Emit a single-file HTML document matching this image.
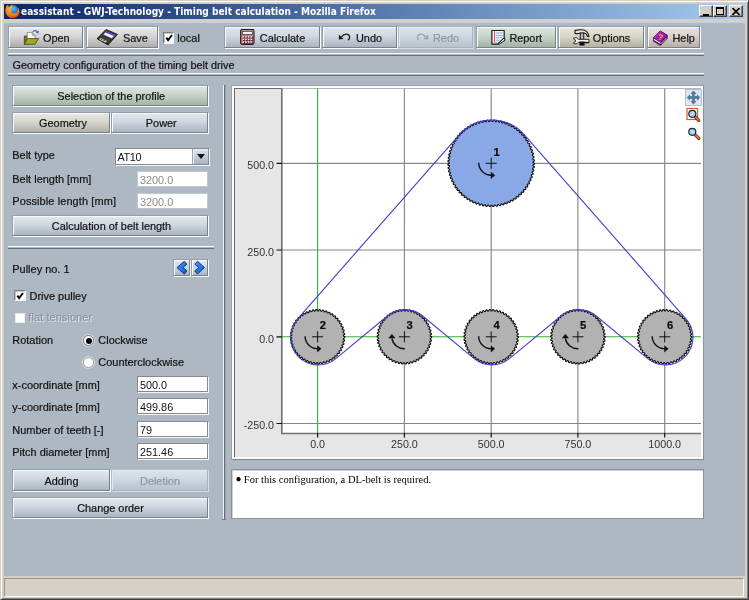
<!DOCTYPE html>
<html><head><meta charset="utf-8"><title>eassistant - GWJ-Technology - Timing belt calculation</title>
<style>
html,body{margin:0;padding:0;}
html{background:#d4d0c8;}
#all{left:0;top:0;width:749px;height:600px;filter:blur(0.4px);}
body{width:749px;height:600px;overflow:hidden;position:relative;background:#d4d0c8;font-family:"Liberation Sans",sans-serif;font-size:10.85px;color:#111;}
.abs,.abs *{position:absolute;}
div{position:absolute;box-sizing:border-box;}
#main{left:4px;top:22px;width:741px;height:554.4px;background:#aeb8c3;}
#title{left:4px;top:3.6px;width:741px;height:15.8px;background:linear-gradient(90deg,#0a246a 0%,#a6caf0 100%);}
#title span{position:absolute;left:17px;top:0.8px;line-height:15px;color:#fff;font-family:"DejaVu Sans Condensed","DejaVu Sans","Liberation Sans",sans-serif;font-weight:bold;font-size:10.07px;white-space:nowrap;}
.wb{background:#d4d0c8;border:1px solid;border-color:#fff #404040 #404040 #fff;box-shadow:inset -1px -1px 0 #808080;}
.btn{border:0;}
.btn i{position:absolute;left:0;top:0;right:1px;bottom:1px;border:1px solid;border-color:#959da6 #7a8087 #7a8087 #959da6;box-shadow:inset 1px 1px 0 #fafbfc,1px 1px 0 #f8fafb;background:linear-gradient(#e2e8ee 0%,#cfd7e0 45%,#aab5c1 100%);}
.btn span{position:absolute;white-space:nowrap;line-height:14px;font-size:10.9px;-webkit-text-stroke:0.2px #111;transform:translate(1px,1px);}
.btn.c span{left:0;right:0;text-align:center;transform:translate(0,1px);}
.btn>svg{transform:translate(1px,1px);}
.tb>svg{transform:translate(1px,1.8px);}
.gray i{background:linear-gradient(#ebebeb 0%,#d6d6d6 45%,#adadad 100%);}
.green i{background:linear-gradient(#dfe7df 0%,#c8d4ca 45%,#a3b3a7 100%);}
.beige i{background:linear-gradient(#eae8de 0%,#d9d6c9 45%,#b5b2a1 100%);}
.pink i{background:linear-gradient(#eae5e2 0%,#d9d1cd 45%,#b9ada9 100%);}
.geo i{background:linear-gradient(#e8e8e2 0%,#d7d7cf 45%,#b0b0a8 100%);}
.dis i{border-color:#b4bdc7 #a8b1bb #a8b1bb #b4bdc7;box-shadow:inset 1px 1px 0 #e2e8ee,1px 1px 0 #d6dde4;background:linear-gradient(#dde4eb 0%,#cfd8e1 45%,#b7c2cd 100%);}
.dis span{color:#8e969e;-webkit-text-stroke:0.2px #8e969e;}
.sep{height:3px;border-top:1px solid #f6f8fa;border-bottom:2px solid #6c7074;border-bottom-width:1.5px;}
.lbl{white-space:nowrap;line-height:14px;font-size:10.95px;-webkit-text-stroke:0.2px #111;margin-left:-0.7px;}
.inp{background:#fff;border:1px solid #858a90;box-shadow:1px 1px 0 #f4f6f8;}
.inp span{position:absolute;left:2px;top:1px;line-height:14px;font-size:10.85px;}
.inp.d{border-color:#c0c8d0;box-shadow:none;}
.inp.d span{color:#8c8c8c;}
.cb{width:11.5px;height:11.3px;background:#fff;border:1px solid;border-color:#7c8086 #f6f8fa #f6f8fa #7c8086;box-shadow:inset 1px 1px 0 #c4c8cc;}
text{font-family:"Liberation Sans",sans-serif;}
.ax{font-size:10.7px;fill:#333;}
.pn{font-size:11.2px;font-weight:bold;fill:#0a0a0a;stroke:#0a0a0a;stroke-width:.2px;}
</style></head><body><div id="all">
<!-- window frame -->
<div style="left:0;top:0;width:749px;height:600px;border:1px solid;border-color:#d4d0c8 #404040 #404040 #d4d0c8;box-shadow:inset 1px 1px 0 #fff,inset -1px -1px 0 #808080;"></div>
<div id="title"><span>eassistant - GWJ-Technology - Timing belt calculation - Mozilla Firefox</span>
<svg style="position:absolute;left:0;top:0" width="18" height="16" viewBox="0 0 18 16"><defs><radialGradient id="fg" cx=".45" cy=".3" r=".8"><stop offset="0" stop-color="#fcc028"/><stop offset=".6" stop-color="#f07c18"/><stop offset="1" stop-color="#c8400c"/></radialGradient><radialGradient id="gg" cx=".5" cy=".35" r=".7"><stop offset="0" stop-color="#58c0f0"/><stop offset="1" stop-color="#1c48b0"/></radialGradient></defs><circle cx="9.300" cy="6.300" r="5" fill="url(#gg)"/><path d="M1.600 4.200C2 2.600 3 1.400 4.200.8 4 1.800 4.300 2.600 5 3 6 1.600 7.500 1 9 1 7.800 1.800 7.600 3 8.200 3.800 7 4.200 6.800 5.600 7.600 6.400 6.600 7 6.800 8.600 8.200 9.200 10.200 10 12.600 9 13.600 7.200 14.200 6 14.200 4.600 13.800 3.600 15.400 5 16 7.600 15.200 9.800 14.200 12.600 11.400 14.200 8.400 14 4.600 13.800 1.600 10.800 1.400 7.400 1.300 6.200 1.300 5.200 1.600 4.200z" fill="url(#fg)"/></svg>
<div class="wb" style="left:695px;top:1px;width:14px;height:12.3px;"><div style="left:3px;top:8px;width:6px;height:2px;background:#000"></div></div>
<div class="wb" style="left:709px;top:1px;width:14px;height:12.3px;"><div style="left:2px;top:1px;width:8px;height:8px;border:1px solid #000;border-top-width:2px"></div></div>
<div class="wb" style="left:725px;top:1px;width:14px;height:12.3px;"><svg style="position:absolute;left:2px;top:2px" width="8" height="7"><path d="M0.5 0L7.500 7M7.500 0L0.500 7" stroke="#000" stroke-width="1.600"/></svg></div>
</div>
<div id="main">
<!-- toolbar -->
<div class="btn tb gray" style="left:4px;top:4px;width:76px;height:23px;"><i></i><span style="left:34px;top:3.7px;">Open</span>
<svg style="position:absolute;left:14px;top:1px" width="18" height="18" viewBox="0 0 18 18"><path d="M1.300 7.200h3.200v8.300H1.300z" fill="#6c7014" stroke="#3c4008" stroke-width=".7"/><path d="M4.200 3.600h5l2.800 2.800v5H4.200z" fill="#fafaf6" stroke="#707070" stroke-width=".7"/><path d="M9.200 3.600v2.800H12" fill="#d8d8d0" stroke="#707070" stroke-width=".6"/><path d="M1.300 15.500L4.600 9.800h11l-3.400 5.700z" fill="#a2a62e" stroke="#484c0a" stroke-width=".8" stroke-linejoin="round"/><path d="M9.800 2.900c1.600-1.500 3.800-1.300 4.800.4" fill="none" stroke="#3a64e0" stroke-width="1.200"/><path d="M15.700 1.600l-.2 3.300-2.700-1.300z" fill="#3a64e0"/></svg></div>
<div class="btn tb gray" style="left:82px;top:4px;width:73px;height:23px;"><i></i><span style="left:36px;top:3.7px;">Save</span>
<svg style="position:absolute;left:10px;top:1px" width="23" height="18" viewBox="0 0 23 18"><path d="M.4 9.500L9 .7l11.400 4.900-8.900 10z" fill="#3c3c3c" stroke="#141414" stroke-width=".9" stroke-linejoin="round"/><path d="M.4 9.500l11.100 6.100v1.100L.4 10.600z" fill="#0c0c0c"/><path d="M9.400 2.700l8.400 3.400-3 3.300-8.400-3.600z" fill="#f4f4f8"/><path d="M9.400 2.700l8.400 3.400-.9 1-8.400-3.500z" fill="#3434f0"/><path d="M3.600 9.300l6.400 3-1.500 1.700-6.400-3.100z" fill="#c4c4c4"/><path d="M5.300 10.100l-1.500 1.600M7.600 11.200l-1.500 1.700" stroke="#222" stroke-width=".9"/></svg></div>
<div class="cb" style="left:158.7px;top:10.3px;"><svg style="position:absolute;left:1px;top:1px" width="8" height="8" viewBox="0 0 8 8"><path d="M1.300 3.600L3.100 6.100 7 1" fill="none" stroke="#000" stroke-width="1.900"/></svg></div>
<div class="lbl" style="left:174px;top:9px;">local</div>
<div class="btn tb c" style="left:220px;top:4px;width:97px;height:23px;"><i></i><span style="top:3.7px;padding-left:20px;">Calculate</span>
<svg style="position:absolute;left:14.800px;top:1px" width="15" height="17" viewBox="0 0 15 17"><defs><linearGradient id="kg" x1="0" y1="0" x2="0" y2="1"><stop offset="0" stop-color="#a49494"/><stop offset=".45" stop-color="#bc7880"/><stop offset="1" stop-color="#cc6878"/></linearGradient></defs><rect x=".6" y=".6" width="13.400" height="15" rx="1.600" fill="url(#kg)" stroke="#2c2020" stroke-width="1.100"/><rect x="2.400" y="2.600" width="9.800" height="3" fill="#fafafa" stroke="#4a3a3a" stroke-width=".7"/><rect x="3.1" y="7.9" width="1.700" height="1.700" fill="#1a1010"/><rect x="2.6" y="7.4" width="1.500" height="1.400" fill="#fbf4f4"/><rect x="5.8" y="7.9" width="1.700" height="1.700" fill="#1a1010"/><rect x="5.3" y="7.4" width="1.500" height="1.400" fill="#fbf4f4"/><rect x="8.5" y="7.9" width="1.700" height="1.700" fill="#1a1010"/><rect x="8.0" y="7.4" width="1.500" height="1.400" fill="#fbf4f4"/><rect x="11.2" y="7.9" width="1.700" height="1.700" fill="#1a1010"/><rect x="10.7" y="7.4" width="1.500" height="1.400" fill="#fbf4f4"/><rect x="3.1" y="10.5" width="1.700" height="1.700" fill="#1a1010"/><rect x="2.6" y="10.0" width="1.500" height="1.400" fill="#fbf4f4"/><rect x="5.8" y="10.5" width="1.700" height="1.700" fill="#1a1010"/><rect x="5.3" y="10.0" width="1.500" height="1.400" fill="#fbf4f4"/><rect x="8.5" y="10.5" width="1.700" height="1.700" fill="#1a1010"/><rect x="8.0" y="10.0" width="1.500" height="1.400" fill="#fbf4f4"/><rect x="11.2" y="10.5" width="1.700" height="1.700" fill="#1a1010"/><rect x="10.7" y="10.0" width="1.500" height="1.400" fill="#fbf4f4"/><rect x="3.1" y="13.1" width="1.700" height="1.700" fill="#1a1010"/><rect x="2.6" y="12.6" width="1.500" height="1.400" fill="#fbf4f4"/><rect x="5.8" y="13.1" width="1.700" height="1.700" fill="#1a1010"/><rect x="5.3" y="12.6" width="1.500" height="1.400" fill="#fbf4f4"/><rect x="8.5" y="13.1" width="1.700" height="1.700" fill="#1a1010"/><rect x="8.0" y="12.6" width="1.500" height="1.400" fill="#fbf4f4"/><rect x="11.2" y="13.1" width="1.700" height="1.700" fill="#1a1010"/><rect x="10.7" y="12.6" width="1.500" height="1.400" fill="#fbf4f4"/></svg></div>
<div class="btn tb c" style="left:318px;top:4px;width:76px;height:23px;"><i></i><span style="top:3.7px;padding-left:18px;">Undo</span>
<svg style="position:absolute;left:15px;top:4px" width="13" height="10" viewBox="0 0 13 10"><path d="M10 8.300C12.600 6.500 12.200 2.600 8.200 2.400 6.200 2.300 4.800 3.400 3.400 5.200" fill="none" stroke="#1c1c1c" stroke-width="1.300"/><path d="M.8 2.800v5l4.700-.5z" fill="#1c1c1c"/></svg></div>
<div class="btn tb c dis" style="left:394px;top:4px;width:76px;height:23px;"><i></i><span style="top:3.7px;padding-left:20px;">Redo</span>
<svg style="position:absolute;left:16.500px;top:4px" width="13" height="10" viewBox="0 0 13 10"><g transform="translate(13,0) scale(-1,1)"><path d="M10 8.300C12.600 6.500 12.200 2.600 8.200 2.400 6.200 2.300 4.800 3.400 3.400 5.200" fill="none" stroke="#9aa2aa" stroke-width="1.300"/><path d="M.8 2.800v5l4.700-.5z" fill="#9aa2aa"/></g></svg></div>
<div class="btn tb c green" style="left:472px;top:4px;width:81px;height:23px;"><i></i><span style="top:3.7px;padding-left:18.5px;">Report</span>
<svg style="position:absolute;left:14px;top:2px" width="16" height="16" viewBox="0 0 16 16"><path d="M.9.700h12.300v7.400L6.600 14.300H.9z" fill="#f2f6fc" stroke="#1c1c1c" stroke-width="1.200" stroke-linejoin="round"/><path d="M4.600 3.200h7.600M4.600 5.600h7.600M4.600 8h6.400M4.600 10.400h4M4.600 12.600h2" stroke="#84b0e4" stroke-width="1"/><path d="M3.500 1.300v12.500" stroke="#f05848" stroke-width="1"/><path d="M13.200 8.100l.8 2.400-6 3.900-1.400-.1z" fill="#eceef2" stroke="#1c1c1c" stroke-width="1" stroke-linejoin="round"/></svg></div>
<div class="btn tb c beige" style="left:554px;top:4px;width:87px;height:23px;"><i></i><span style="top:3.7px;padding-left:20px;">Options</span>
<svg style="position:absolute;left:13px;top:1px" width="18" height="18" viewBox="0 0 18 18"><path d="M3 1.600L8 1C12 .5 16 2.200 17 7.600L15.300 7.600C15 5.200 13.500 4.200 11.600 4.200L8.400 4.200C7 4.700 5 5 3 4.600z" fill="#e6e6e6" stroke="#1a1a1a" stroke-width="1.100" stroke-linejoin="round"/><rect x="8.200" y="4.300" width="3.600" height="7" fill="#6a6a6a" stroke="#1a1a1a" stroke-width=".9"/><path d="M10 4.800v6" stroke="#f4f4f4" stroke-width="1.100"/><path d="M1.200 9.600c1.800-1.300 4.300-.8 5.200.9H17v3H6.400c-.9 1.700-3.400 2.200-5.200.9l2.200-1.500v-1.800z" fill="#f2f2f2" stroke="#1a1a1a" stroke-width=".9" stroke-linejoin="round"/><rect x="7.400" y="12.800" width="5.200" height="4" fill="#141414"/><path d="M12 13.900h5.200" stroke="#141414" stroke-width="1.300"/></svg></div>
<div class="btn tb pink" style="left:643px;top:4px;width:54px;height:23px;"><i></i><span style="left:24.5px;top:3.7px;">Help</span>
<svg style="position:absolute;left:5px;top:2px" width="17" height="17" viewBox="0 0 17 17"><path d="M.3 8L7.300 1.200l7 4.300v3L7.400 15.700.3 11.200z" fill="#3c0a4c" stroke="#2a0636" stroke-width=".6" stroke-linejoin="round"/><path d="M.9 10.200l6.500 4 .1-1.700-6.600-3.800z" fill="#f6f2f8"/><path d="M7.900 14l6-6.300" stroke="#f0e8f4" stroke-width=".8"/><path d="M.3 8L7.300 1.200l7 4.300-6.900 7z" fill="#a41cb4" stroke="#5c0c6c" stroke-width=".6" stroke-linejoin="round"/><path d="M1.600 7.600L7.400 2" stroke="#d890e0" stroke-width=".7" stroke-dasharray=".8 .7"/><text x="5.200" y="10" style="font-size:8px;font-weight:bold;fill:#f8cc10" transform="rotate(14 7 7)">?</text></svg></div>
<div class="sep" style="left:4px;top:30.5px;width:696px;"></div>
<div class="lbl" style="left:9.3px;top:36px;font-size:10.85px;">Geometry configuration of the timing belt drive</div>
<div class="sep" style="left:4px;top:51px;width:696px;"></div>
<!-- left panel -->
<div class="btn c green" style="left:8px;top:63px;width:197px;height:22px;"><i></i><span style="top:3.2px;padding-left:1.5px;">Selection of the profile</span></div>
<div class="btn c geo" style="left:8px;top:90px;width:99px;height:22px;"><i></i><span style="top:3px;padding-left:3px;">Geometry</span></div>
<div class="btn c" style="left:107px;top:90px;width:98px;height:22px;"><i></i><span style="top:3px;padding-left:2.6px;">Power</span></div>
<div class="lbl" style="left:9px;top:126px;">Belt type</div>
<div class="inp" style="left:111px;top:126px;width:94px;height:17px;"><span style="left:1.4px;letter-spacing:-0.3px;">AT10</span>
<div style="right:0;top:0;width:16px;height:15px;border-left:1px solid #98a2ac;background:linear-gradient(#dde4eb,#a8b3bf);box-shadow:inset 1px 1px 0 #eef2f6;"><div style="left:3.5px;top:5px;width:0;height:0;border:4px solid transparent;border-top:5px solid #111;border-bottom:0;"></div></div></div>
<div class="lbl" style="left:9px;top:150px;">Belt length [mm]</div>
<div class="inp d" style="left:133px;top:149px;width:71px;height:16px;"><span>3200.0</span></div>
<div class="lbl" style="left:9px;top:172px;letter-spacing:0.11px;">Possible length [mm]</div>
<div class="inp d" style="left:133px;top:171px;width:71px;height:16px;"><span>3200.0</span></div>
<div class="btn c" style="left:8px;top:193px;width:197px;height:22px;"><i></i><span style="top:3px;padding-left:2px;">Calculation of belt length</span></div>
<div class="sep" style="left:4px;top:224px;width:206px;"></div>
<div class="lbl" style="left:9px;top:240px;">Pulley no. 1</div>
<div class="btn" style="left:169px;top:237px;width:18px;height:18px;"><i></i><svg style="position:absolute;left:0;top:0" width="17" height="17" viewBox="0 0 17 17"><defs><linearGradient id="cg" x1="0" y1="0" x2="1" y2="1"><stop offset="0" stop-color="#3c9cf8"/><stop offset="1" stop-color="#0c58cc"/></linearGradient></defs><path d="M3 7.600L10.300 1.300 13 4.200 9 7.600 13 11 10.300 14z" fill="url(#cg)" stroke="#0a2c84" stroke-width=".9" stroke-linejoin="round"/></svg></div>
<div class="btn" style="left:187px;top:237px;width:18px;height:18px;"><i></i><svg style="position:absolute;left:0;top:0" width="17" height="17" viewBox="0 0 17 17"><path d="M12.500 7.600L5.500 1.300 2.800 4.200 6.800 7.600 2.800 11 5.500 14z" fill="url(#cg)" stroke="#0a2c84" stroke-width=".9" stroke-linejoin="round"/></svg></div>
<div class="cb" style="left:10px;top:268px;"><svg style="position:absolute;left:1px;top:1px" width="8" height="8" viewBox="0 0 8 8"><path d="M1.300 3.600L3.100 6.100 7 1" fill="none" stroke="#000" stroke-width="1.900"/></svg></div>
<div class="lbl" style="left:26.2px;top:267px;">Drive pulley</div>
<div class="cb" style="left:11px;top:291px;width:10px;height:10px;border-color:#e8ecf0;box-shadow:none;"></div>
<div class="lbl" style="left:25px;top:288px;color:#88929c;-webkit-text-stroke:0.15px #88929c;text-shadow:1px 1px 0 #e4e9ee;letter-spacing:0.09px;">flat tensioner</div>
<div class="lbl" style="left:9px;top:311px;">Rotation</div>
<div style="left:79px;top:313px;width:11px;height:11px;border-radius:50%;background:#fff;border:1px solid #70767c;box-shadow:0 0 0 1px #d0d6dc;"><div style="left:1.5px;top:1.5px;width:6px;height:6px;border-radius:50%;background:#000;"></div></div>
<div class="lbl" style="left:95px;top:311px;">Clockwise</div>
<div style="left:79px;top:335px;width:11px;height:11px;border-radius:50%;background:#fff;border:1px solid #9aa0a6;box-shadow:0 0 0 1px #d0d6dc;"></div>
<div class="lbl" style="left:95px;top:333px;">Counterclockwise</div>
<div class="lbl" style="left:9px;top:356px;">x-coordinate [mm]</div>
<div class="inp" style="left:133px;top:354px;width:71px;height:16px;"><span>500.0</span></div>
<div class="lbl" style="left:9px;top:378px;">y-coordinate [mm]</div>
<div class="inp" style="left:133px;top:376px;width:71px;height:16px;"><span>499.86</span></div>
<div class="lbl" style="left:9px;top:401px;">Number of teeth [-]</div>
<div class="inp" style="left:133px;top:399px;width:71px;height:16px;"><span>79</span></div>
<div class="lbl" style="left:9px;top:423px;">Pitch diameter [mm]</div>
<div class="inp" style="left:133px;top:421px;width:71px;height:16px;"><span>251.46</span></div>
<div class="btn c" style="left:8px;top:447px;width:99px;height:23px;"><i></i><span style="top:4px;">Adding</span></div>
<div class="btn c dis" style="left:107px;top:447px;width:98px;height:23px;"><i></i><span style="top:4px;">Deletion</span></div>
<div class="btn c" style="left:8px;top:475px;width:197px;height:22px;"><i></i><span style="top:2.6px;">Change order</span></div>
<!-- splitter -->
<div style="left:218.7px;top:63px;width:1px;height:434px;background:#f0f3f6;"></div>
<div style="left:220px;top:63px;width:2px;height:434.5px;background:linear-gradient(90deg,#6a6e72 0,#6a6e72 55%,#9aa2aa 55%,#9aa2aa 100%);"></div>
<div style="left:218px;top:497px;width:4px;height:1.2px;background:#70747a;"></div>
<!-- chart panel -->
<div style="left:227px;top:63px;width:473.3px;height:374.8px;background:#fcfcfc;border:1px solid #98a2ac;border-bottom-color:#7e868e;border-right-color:#8a929a;"></div>
<div style="left:230px;top:65.5px;width:467.3px;height:369.5px;background:#e6e6e6;border-left:1px solid #6c6c6c;border-top:1px solid #6c6c6c;"></div>
<svg style="position:absolute;left:-4px;top:-22px" width="749" height="600" viewBox="0 0 749 600">
<rect x="282" y="88.500" width="420" height="344.500" fill="#fff"/>
<g stroke="#868686" stroke-width="1.15">
<path d="M404.400 88.500V433M491.200 88.500V433M577.900 88.500V433M664.700 88.500V433"/>
<path d="M282 163.300H701M282 250H701M282 423.500H701"/>
</g>
<path d="M317.600 88.500V433M282 336.800H701" stroke="#30b430" stroke-width="1.100"/>
<path d="M281.800 88.500V433.500H701" fill="none" stroke="#707070" stroke-width="1.600"/>
<g stroke="#111" stroke-width="1.200">
<path d="M276.500 163.300H282M276.500 250H282M276.500 336.800H282M276.500 423.500H282"/>
<path d="M317.600 433V437.500M404.400 433V437.500M491.200 433V437.500M577.900 433V437.500M664.700 433V437.500"/>
</g>
<g class="ax" text-anchor="end"><text x="274" y="169.100">500.0</text><text x="274" y="255.800">250.0</text><text x="274" y="342.600">0.0</text><text x="274" y="429.300">-250.0</text></g>
<g class="ax" text-anchor="middle"><text x="317.600" y="448">0.0</text><text x="404.400" y="448">250.0</text><text x="491.200" y="448">500.0</text><text x="577.900" y="448">750.0</text><text x="664.700" y="448">1000.0</text></g>
<path d="M534.44 163.30 L534.43 164.16 L533.01 164.96 L532.97 165.80 L534.30 166.74 L534.23 167.60 L532.74 168.28 L532.64 169.11 L533.89 170.16 L533.75 171.00 L532.22 171.57 L532.04 172.39 L533.21 173.53 L533.00 174.36 L531.43 174.81 L531.19 175.61 L532.27 176.84 L531.99 177.65 L530.39 177.97 L530.09 178.75 L531.06 180.06 L530.72 180.85 L529.10 181.04 L528.74 181.80 L529.60 183.18 L529.20 183.94 L527.57 184.00 L527.15 184.72 L527.90 186.17 L527.44 186.90 L525.81 186.83 L525.33 187.52 L525.97 189.02 L525.45 189.71 L523.83 189.51 L523.30 190.15 L523.82 191.71 L523.24 192.35 L521.64 192.02 L521.06 192.62 L521.46 194.21 L520.83 194.81 L519.26 194.36 L518.64 194.91 L518.90 196.52 L518.24 197.07 L516.71 196.49 L516.04 196.99 L516.18 198.62 L515.47 199.11 L513.99 198.42 L513.29 198.86 L513.29 200.50 L512.55 200.93 L511.13 200.12 L510.39 200.51 L510.26 202.14 L509.49 202.51 L508.14 201.59 L507.37 201.92 L507.12 203.54 L506.32 203.85 L505.04 202.82 L504.25 203.09 L503.87 204.68 L503.05 204.92 L501.86 203.80 L501.05 204.00 L500.54 205.56 L499.70 205.74 L498.61 204.52 L497.79 204.66 L497.16 206.17 L496.30 206.28 L495.31 204.98 L494.48 205.06 L493.73 206.51 L492.87 206.56 L491.98 205.18 L491.15 205.19 L490.29 206.58 L489.43 206.56 L488.65 205.11 L487.82 205.06 L486.85 206.38 L486.00 206.28 L485.34 204.78 L484.51 204.66 L483.44 205.90 L482.60 205.74 L482.06 204.19 L481.25 204.00 L480.08 205.15 L479.25 204.92 L478.84 203.34 L478.05 203.09 L476.79 204.14 L475.98 203.85 L475.70 202.24 L474.93 201.92 L473.59 202.87 L472.81 202.51 L472.65 200.88 L471.91 200.51 L470.51 201.35 L469.75 200.93 L469.73 199.30 L469.01 198.86 L467.55 199.59 L466.83 199.11 L466.93 197.48 L466.26 196.99 L464.74 197.60 L464.06 197.07 L464.29 195.45 L463.66 194.91 L462.10 195.39 L461.47 194.81 L461.82 193.21 L461.24 192.62 L459.64 192.98 L459.06 192.35 L459.54 190.79 L459.00 190.15 L457.38 190.39 L456.85 189.71 L457.46 188.19 L456.97 187.52 L455.34 187.62 L454.86 186.90 L455.59 185.43 L455.15 184.72 L453.52 184.70 L453.10 183.94 L453.94 182.54 L453.56 181.80 L451.94 181.64 L451.58 180.85 L452.53 179.52 L452.21 178.75 L450.60 178.46 L450.31 177.65 L451.36 176.40 L451.11 175.61 L449.53 175.19 L449.30 174.36 L450.45 173.20 L450.26 172.39 L448.71 171.85 L448.55 171.00 L449.79 169.93 L449.66 169.11 L448.17 168.45 L448.07 167.60 L449.39 166.63 L449.33 165.80 L447.89 165.02 L447.87 164.16 L449.26 163.30 L449.27 162.47 L447.89 161.58 L447.94 160.72 L449.39 159.97 L449.47 159.14 L448.17 158.15 L448.28 157.29 L449.79 156.66 L449.93 155.84 L448.71 154.75 L448.89 153.91 L450.45 153.40 L450.65 152.59 L449.53 151.40 L449.77 150.58 L451.36 150.20 L451.63 149.41 L450.60 148.13 L450.91 147.33 L452.53 147.08 L452.86 146.31 L451.94 144.96 L452.31 144.18 L453.94 144.06 L454.33 143.32 L453.52 141.90 L453.95 141.16 L455.59 141.16 L456.03 140.46 L455.34 138.98 L455.83 138.27 L457.46 138.41 L457.96 137.74 L457.38 136.21 L457.93 135.55 L459.54 135.81 L460.09 135.19 L459.64 133.61 L460.24 132.99 L461.82 133.38 L462.43 132.81 L462.10 131.20 L462.74 130.63 L464.29 131.15 L464.94 130.62 L464.74 129.00 L465.43 128.48 L466.93 129.12 L467.62 128.64 L467.55 127.01 L468.27 126.55 L469.73 127.30 L470.45 126.88 L470.51 125.25 L471.27 124.84 L472.65 125.71 L473.40 125.35 L473.59 123.73 L474.38 123.39 L475.70 124.36 L476.48 124.06 L476.79 122.46 L477.61 122.18 L478.84 123.26 L479.64 123.02 L480.08 121.45 L480.92 121.23 L482.06 122.41 L482.88 122.23 L483.44 120.70 L484.29 120.55 L485.34 121.81 L486.16 121.71 L486.85 120.22 L487.71 120.14 L488.65 121.48 L489.48 121.44 L490.29 120.02 L491.15 120.01 L491.98 121.42 L492.82 121.44 L493.73 120.08 L494.59 120.14 L495.31 121.61 L496.14 121.71 L497.16 120.43 L498.01 120.55 L498.61 122.08 L499.42 122.23 L500.54 121.04 L501.38 121.23 L501.86 122.80 L502.66 123.02 L503.87 121.92 L504.69 122.18 L505.04 123.78 L505.82 124.06 L507.12 123.06 L507.92 123.39 L508.14 125.01 L508.90 125.35 L510.26 124.46 L511.03 124.84 L511.13 126.48 L511.85 126.88 L513.29 126.10 L514.03 126.55 L513.99 128.18 L514.68 128.64 L516.18 127.97 L516.87 128.48 L516.71 130.11 L517.36 130.62 L518.90 130.07 L519.56 130.63 L519.26 132.24 L519.87 132.81 L521.46 132.38 L522.06 132.99 L521.64 134.57 L522.21 135.19 L523.82 134.89 L524.37 135.55 L523.83 137.09 L524.34 137.74 L525.97 137.58 L526.47 138.27 L525.81 139.77 L526.27 140.46 L527.90 140.42 L528.35 141.16 L527.57 142.59 L527.97 143.32 L529.60 143.42 L529.99 144.18 L529.10 145.55 L529.44 146.31 L531.06 146.53 L531.39 147.33 L530.39 148.62 L530.67 149.41 L532.27 149.76 L532.53 150.58 L531.43 151.79 L531.65 152.59 L533.21 153.07 L533.41 153.91 L532.22 155.02 L532.37 155.84 L533.89 156.44 L534.02 157.29 L532.74 158.31 L532.83 159.14 L534.30 159.86 L534.36 160.72 L533.01 161.63 L533.03 162.47 L534.44 163.30Z" fill="#8aa7e6" stroke="#0a0a0a" stroke-width="1.05" stroke-linejoin="round"/>
<path d="M344.87 336.80 L344.86 337.66 L343.42 338.42 L343.36 339.23 L344.66 340.22 L344.54 341.07 L343.01 341.65 L342.85 342.44 L344.02 343.58 L343.79 344.41 L342.21 344.79 L341.94 345.56 L342.96 346.84 L342.63 347.63 L341.01 347.82 L340.65 348.55 L341.50 349.94 L341.07 350.68 L339.44 350.66 L339.00 351.34 L339.66 352.83 L339.15 353.52 L337.53 353.29 L337.01 353.91 L337.48 355.47 L336.88 356.08 L335.31 355.66 L334.71 356.21 L334.98 357.81 L334.32 358.35 L332.81 357.73 L332.14 358.20 L332.21 359.83 L331.48 360.27 L330.06 359.47 L329.35 359.85 L329.21 361.48 L328.43 361.83 L327.12 360.86 L326.36 361.14 L326.03 362.74 L325.21 362.99 L324.03 361.86 L323.24 362.05 L322.71 363.59 L321.87 363.74 L320.84 362.47 L320.03 362.56 L319.31 364.02 L318.46 364.06 L317.60 362.67 L316.79 362.66 L315.89 364.02 L315.03 363.95 L314.36 362.47 L313.55 362.35 L312.49 363.59 L311.65 363.42 L311.17 361.86 L310.38 361.64 L309.17 362.74 L308.36 362.46 L308.08 360.86 L307.32 360.54 L305.99 361.48 L305.22 361.10 L305.14 359.47 L304.43 359.07 L302.99 359.83 L302.27 359.36 L302.39 357.73 L301.74 357.24 L300.22 357.81 L299.56 357.26 L299.89 355.66 L299.31 355.09 L297.72 355.47 L297.14 354.84 L297.67 353.29 L297.16 352.66 L295.54 352.83 L295.04 352.13 L295.76 350.66 L295.33 349.97 L293.70 349.94 L293.30 349.18 L294.19 347.82 L293.86 347.08 L292.24 346.84 L291.94 346.04 L292.99 344.79 L292.76 344.02 L291.18 343.58 L290.98 342.75 L292.19 341.65 L292.05 340.85 L290.54 340.22 L290.45 339.37 L291.78 338.42 L291.74 337.61 L290.33 336.80 L290.34 335.94 L291.78 335.18 L291.84 334.37 L290.54 333.38 L290.66 332.53 L292.19 331.95 L292.35 331.16 L291.18 330.02 L291.41 329.19 L292.99 328.81 L293.26 328.04 L292.24 326.76 L292.57 325.97 L294.19 325.78 L294.55 325.05 L293.70 323.66 L294.13 322.92 L295.76 322.94 L296.20 322.26 L295.54 320.77 L296.05 320.08 L297.67 320.31 L298.19 319.69 L297.72 318.13 L298.32 317.52 L299.89 317.94 L300.49 317.39 L300.22 315.79 L300.88 315.25 L302.39 315.87 L303.06 315.40 L302.99 313.77 L303.72 313.33 L305.14 314.13 L305.85 313.75 L305.99 312.12 L306.77 311.77 L308.08 312.74 L308.84 312.46 L309.17 310.86 L309.99 310.61 L311.17 311.74 L311.96 311.55 L312.49 310.01 L313.33 309.86 L314.36 311.13 L315.17 311.04 L315.89 309.58 L316.74 309.54 L317.60 310.93 L318.41 310.94 L319.31 309.58 L320.17 309.65 L320.84 311.13 L321.65 311.25 L322.71 310.01 L323.55 310.18 L324.03 311.74 L324.82 311.96 L326.03 310.86 L326.84 311.14 L327.12 312.74 L327.88 313.06 L329.21 312.12 L329.98 312.50 L330.06 314.13 L330.77 314.53 L332.21 313.77 L332.93 314.24 L332.81 315.87 L333.46 316.36 L334.98 315.79 L335.64 316.34 L335.31 317.94 L335.89 318.51 L337.48 318.13 L338.06 318.76 L337.53 320.31 L338.04 320.94 L339.66 320.77 L340.16 321.47 L339.44 322.94 L339.87 323.63 L341.50 323.66 L341.90 324.42 L341.01 325.78 L341.34 326.52 L342.96 326.76 L343.26 327.56 L342.21 328.81 L342.44 329.58 L344.02 330.02 L344.22 330.85 L343.01 331.95 L343.15 332.75 L344.66 333.38 L344.75 334.23 L343.42 335.18 L343.46 335.99 L344.87 336.80Z" fill="#b2b2b2" stroke="#0a0a0a" stroke-width="1.05" stroke-linejoin="round"/>
<path d="M431.65 336.80 L431.63 337.66 L430.20 338.42 L430.13 339.23 L431.43 340.22 L431.31 341.07 L429.79 341.65 L429.62 342.44 L430.79 343.58 L430.56 344.41 L428.98 344.79 L428.72 345.56 L429.73 346.84 L429.40 347.63 L427.78 347.82 L427.43 348.55 L428.27 349.94 L427.85 350.68 L426.22 350.66 L425.77 351.34 L426.44 352.83 L425.92 353.52 L424.31 353.29 L423.78 353.91 L424.26 355.47 L423.66 356.08 L422.09 355.66 L421.48 356.21 L421.76 357.81 L421.09 358.35 L419.58 357.73 L418.92 358.20 L418.99 359.83 L418.26 360.27 L416.84 359.47 L416.12 359.85 L415.99 361.48 L415.21 361.83 L413.90 360.86 L413.14 361.14 L412.80 362.74 L411.98 362.99 L410.81 361.86 L410.02 362.05 L409.49 363.59 L408.64 363.74 L407.62 362.47 L406.81 362.56 L406.09 364.02 L405.23 364.06 L404.38 362.67 L403.56 362.66 L402.66 364.02 L401.81 363.95 L401.13 362.47 L400.33 362.35 L399.26 363.59 L398.43 363.42 L397.94 361.86 L397.16 361.64 L395.95 362.74 L395.14 362.46 L394.85 360.86 L394.10 360.54 L392.76 361.48 L391.99 361.10 L391.91 359.47 L391.20 359.07 L389.76 359.83 L389.05 359.36 L389.17 357.73 L388.52 357.24 L386.99 357.81 L386.34 357.26 L386.66 355.66 L386.08 355.09 L384.49 355.47 L383.92 354.84 L384.44 353.29 L383.93 352.66 L382.31 352.83 L381.82 352.13 L382.53 350.66 L382.11 349.97 L380.48 349.94 L380.08 349.18 L380.97 347.82 L380.63 347.08 L379.02 346.84 L378.72 346.04 L379.77 344.79 L379.53 344.02 L377.96 343.58 L377.76 342.75 L378.96 341.65 L378.82 340.85 L377.32 340.22 L377.22 339.37 L378.55 338.42 L378.52 337.61 L377.10 336.80 L377.12 335.94 L378.55 335.18 L378.62 334.37 L377.32 333.38 L377.44 332.53 L378.96 331.95 L379.13 331.16 L377.96 330.02 L378.19 329.19 L379.77 328.81 L380.03 328.04 L379.02 326.76 L379.35 325.97 L380.97 325.78 L381.32 325.05 L380.48 323.66 L380.90 322.92 L382.53 322.94 L382.98 322.26 L382.31 320.77 L382.83 320.08 L384.44 320.31 L384.97 319.69 L384.49 318.13 L385.09 317.52 L386.66 317.94 L387.27 317.39 L386.99 315.79 L387.66 315.25 L389.17 315.87 L389.83 315.40 L389.76 313.77 L390.49 313.33 L391.91 314.13 L392.63 313.75 L392.76 312.12 L393.54 311.77 L394.85 312.74 L395.61 312.46 L395.95 310.86 L396.77 310.61 L397.94 311.74 L398.73 311.55 L399.26 310.01 L400.11 309.86 L401.13 311.13 L401.94 311.04 L402.66 309.58 L403.52 309.54 L404.38 310.93 L405.19 310.94 L406.09 309.58 L406.94 309.65 L407.62 311.13 L408.42 311.25 L409.49 310.01 L410.32 310.18 L410.81 311.74 L411.59 311.96 L412.80 310.86 L413.61 311.14 L413.90 312.74 L414.65 313.06 L415.99 312.12 L416.76 312.50 L416.84 314.13 L417.55 314.53 L418.99 313.77 L419.70 314.24 L419.58 315.87 L420.23 316.36 L421.76 315.79 L422.41 316.34 L422.09 317.94 L422.67 318.51 L424.26 318.13 L424.83 318.76 L424.31 320.31 L424.82 320.94 L426.44 320.77 L426.93 321.47 L426.22 322.94 L426.64 323.63 L428.27 323.66 L428.67 324.42 L427.78 325.78 L428.12 326.52 L429.73 326.76 L430.03 327.56 L428.98 328.81 L429.22 329.58 L430.79 330.02 L430.99 330.85 L429.79 331.95 L429.93 332.75 L431.43 333.38 L431.53 334.23 L430.20 335.18 L430.23 335.99 L431.65 336.80Z" fill="#b2b2b2" stroke="#0a0a0a" stroke-width="1.05" stroke-linejoin="round"/>
<path d="M518.42 336.80 L518.41 337.66 L516.97 338.42 L516.91 339.23 L518.21 340.22 L518.09 341.07 L516.56 341.65 L516.40 342.44 L517.57 343.58 L517.34 344.41 L515.76 344.79 L515.49 345.56 L516.51 346.84 L516.18 347.63 L514.56 347.82 L514.20 348.55 L515.05 349.94 L514.62 350.68 L512.99 350.66 L512.55 351.34 L513.21 352.83 L512.70 353.52 L511.08 353.29 L510.56 353.91 L511.03 355.47 L510.43 356.08 L508.86 355.66 L508.26 356.21 L508.53 357.81 L507.87 358.35 L506.36 357.73 L505.69 358.20 L505.76 359.83 L505.03 360.27 L503.61 359.47 L502.90 359.85 L502.76 361.48 L501.98 361.83 L500.67 360.86 L499.91 361.14 L499.58 362.74 L498.76 362.99 L497.58 361.86 L496.79 362.05 L496.26 363.59 L495.42 363.74 L494.39 362.47 L493.58 362.56 L492.86 364.02 L492.01 364.06 L491.15 362.67 L490.34 362.66 L489.44 364.02 L488.58 363.95 L487.91 362.47 L487.10 362.35 L486.04 363.59 L485.20 363.42 L484.72 361.86 L483.93 361.64 L482.72 362.74 L481.91 362.46 L481.63 360.86 L480.87 360.54 L479.54 361.48 L478.77 361.10 L478.69 359.47 L477.98 359.07 L476.54 359.83 L475.82 359.36 L475.94 357.73 L475.29 357.24 L473.77 357.81 L473.11 357.26 L473.44 355.66 L472.86 355.09 L471.27 355.47 L470.69 354.84 L471.22 353.29 L470.71 352.66 L469.09 352.83 L468.59 352.13 L469.31 350.66 L468.88 349.97 L467.25 349.94 L466.85 349.18 L467.74 347.82 L467.41 347.08 L465.79 346.84 L465.49 346.04 L466.54 344.79 L466.31 344.02 L464.73 343.58 L464.53 342.75 L465.74 341.65 L465.60 340.85 L464.09 340.22 L464.00 339.37 L465.33 338.42 L465.29 337.61 L463.88 336.80 L463.89 335.94 L465.33 335.18 L465.39 334.37 L464.09 333.38 L464.21 332.53 L465.74 331.95 L465.90 331.16 L464.73 330.02 L464.96 329.19 L466.54 328.81 L466.81 328.04 L465.79 326.76 L466.12 325.97 L467.74 325.78 L468.10 325.05 L467.25 323.66 L467.68 322.92 L469.31 322.94 L469.75 322.26 L469.09 320.77 L469.60 320.08 L471.22 320.31 L471.74 319.69 L471.27 318.13 L471.87 317.52 L473.44 317.94 L474.04 317.39 L473.77 315.79 L474.43 315.25 L475.94 315.87 L476.61 315.40 L476.54 313.77 L477.27 313.33 L478.69 314.13 L479.40 313.75 L479.54 312.12 L480.32 311.77 L481.63 312.74 L482.39 312.46 L482.72 310.86 L483.54 310.61 L484.72 311.74 L485.51 311.55 L486.04 310.01 L486.88 309.86 L487.91 311.13 L488.72 311.04 L489.44 309.58 L490.29 309.54 L491.15 310.93 L491.96 310.94 L492.86 309.58 L493.72 309.65 L494.39 311.13 L495.20 311.25 L496.26 310.01 L497.10 310.18 L497.58 311.74 L498.37 311.96 L499.58 310.86 L500.39 311.14 L500.67 312.74 L501.43 313.06 L502.76 312.12 L503.53 312.50 L503.61 314.13 L504.32 314.53 L505.76 313.77 L506.48 314.24 L506.36 315.87 L507.01 316.36 L508.53 315.79 L509.19 316.34 L508.86 317.94 L509.44 318.51 L511.03 318.13 L511.61 318.76 L511.08 320.31 L511.59 320.94 L513.21 320.77 L513.71 321.47 L512.99 322.94 L513.42 323.63 L515.05 323.66 L515.45 324.42 L514.56 325.78 L514.89 326.52 L516.51 326.76 L516.81 327.56 L515.76 328.81 L515.99 329.58 L517.57 330.02 L517.77 330.85 L516.56 331.95 L516.70 332.75 L518.21 333.38 L518.30 334.23 L516.97 335.18 L517.01 335.99 L518.42 336.80Z" fill="#b2b2b2" stroke="#0a0a0a" stroke-width="1.05" stroke-linejoin="round"/>
<path d="M605.20 336.80 L605.18 337.66 L603.75 338.42 L603.68 339.23 L604.98 340.22 L604.86 341.07 L603.34 341.65 L603.17 342.44 L604.34 343.58 L604.11 344.41 L602.53 344.79 L602.27 345.56 L603.28 346.84 L602.95 347.63 L601.33 347.82 L600.98 348.55 L601.82 349.94 L601.40 350.68 L599.77 350.66 L599.32 351.34 L599.99 352.83 L599.47 353.52 L597.86 353.29 L597.33 353.91 L597.81 355.47 L597.21 356.08 L595.64 355.66 L595.03 356.21 L595.31 357.81 L594.64 358.35 L593.13 357.73 L592.47 358.20 L592.54 359.83 L591.81 360.27 L590.39 359.47 L589.67 359.85 L589.54 361.48 L588.76 361.83 L587.45 360.86 L586.69 361.14 L586.35 362.74 L585.53 362.99 L584.36 361.86 L583.57 362.05 L583.04 363.59 L582.19 363.74 L581.17 362.47 L580.36 362.56 L579.64 364.02 L578.78 364.06 L577.92 362.67 L577.11 362.66 L576.21 364.02 L575.36 363.95 L574.68 362.47 L573.88 362.35 L572.81 363.59 L571.98 363.42 L571.49 361.86 L570.71 361.64 L569.50 362.74 L568.69 362.46 L568.40 360.86 L567.65 360.54 L566.31 361.48 L565.54 361.10 L565.46 359.47 L564.75 359.07 L563.31 359.83 L562.60 359.36 L562.72 357.73 L562.07 357.24 L560.54 357.81 L559.89 357.26 L560.21 355.66 L559.63 355.09 L558.04 355.47 L557.47 354.84 L557.99 353.29 L557.48 352.66 L555.86 352.83 L555.37 352.13 L556.08 350.66 L555.66 349.97 L554.03 349.94 L553.63 349.18 L554.52 347.82 L554.18 347.08 L552.57 346.84 L552.27 346.04 L553.32 344.79 L553.08 344.02 L551.51 343.58 L551.31 342.75 L552.51 341.65 L552.37 340.85 L550.87 340.22 L550.77 339.37 L552.10 338.42 L552.07 337.61 L550.65 336.80 L550.67 335.94 L552.10 335.18 L552.17 334.37 L550.87 333.38 L550.99 332.53 L552.51 331.95 L552.68 331.16 L551.51 330.02 L551.74 329.19 L553.32 328.81 L553.58 328.04 L552.57 326.76 L552.90 325.97 L554.52 325.78 L554.87 325.05 L554.03 323.66 L554.45 322.92 L556.08 322.94 L556.53 322.26 L555.86 320.77 L556.38 320.08 L557.99 320.31 L558.52 319.69 L558.04 318.13 L558.64 317.52 L560.21 317.94 L560.82 317.39 L560.54 315.79 L561.21 315.25 L562.72 315.87 L563.38 315.40 L563.31 313.77 L564.04 313.33 L565.46 314.13 L566.18 313.75 L566.31 312.12 L567.09 311.77 L568.40 312.74 L569.16 312.46 L569.50 310.86 L570.32 310.61 L571.49 311.74 L572.28 311.55 L572.81 310.01 L573.66 309.86 L574.68 311.13 L575.49 311.04 L576.21 309.58 L577.07 309.54 L577.92 310.93 L578.74 310.94 L579.64 309.58 L580.49 309.65 L581.17 311.13 L581.97 311.25 L583.04 310.01 L583.87 310.18 L584.36 311.74 L585.14 311.96 L586.35 310.86 L587.16 311.14 L587.45 312.74 L588.20 313.06 L589.54 312.12 L590.31 312.50 L590.39 314.13 L591.10 314.53 L592.54 313.77 L593.25 314.24 L593.13 315.87 L593.78 316.36 L595.31 315.79 L595.96 316.34 L595.64 317.94 L596.22 318.51 L597.81 318.13 L598.38 318.76 L597.86 320.31 L598.37 320.94 L599.99 320.77 L600.48 321.47 L599.77 322.94 L600.19 323.63 L601.82 323.66 L602.22 324.42 L601.33 325.78 L601.67 326.52 L603.28 326.76 L603.58 327.56 L602.53 328.81 L602.77 329.58 L604.34 330.02 L604.54 330.85 L603.34 331.95 L603.48 332.75 L604.98 333.38 L605.08 334.23 L603.75 335.18 L603.78 335.99 L605.20 336.80Z" fill="#b2b2b2" stroke="#0a0a0a" stroke-width="1.05" stroke-linejoin="round"/>
<path d="M691.97 336.80 L691.96 337.66 L690.52 338.42 L690.46 339.23 L691.76 340.22 L691.64 341.07 L690.11 341.65 L689.95 342.44 L691.12 343.58 L690.89 344.41 L689.31 344.79 L689.04 345.56 L690.06 346.84 L689.73 347.63 L688.11 347.82 L687.75 348.55 L688.60 349.94 L688.17 350.68 L686.54 350.66 L686.10 351.34 L686.76 352.83 L686.25 353.52 L684.63 353.29 L684.11 353.91 L684.58 355.47 L683.98 356.08 L682.41 355.66 L681.81 356.21 L682.08 357.81 L681.42 358.35 L679.91 357.73 L679.24 358.20 L679.31 359.83 L678.58 360.27 L677.16 359.47 L676.45 359.85 L676.31 361.48 L675.53 361.83 L674.22 360.86 L673.46 361.14 L673.13 362.74 L672.31 362.99 L671.13 361.86 L670.34 362.05 L669.81 363.59 L668.97 363.74 L667.94 362.47 L667.13 362.56 L666.41 364.02 L665.56 364.06 L664.70 362.67 L663.89 362.66 L662.99 364.02 L662.13 363.95 L661.46 362.47 L660.65 362.35 L659.59 363.59 L658.75 363.42 L658.27 361.86 L657.48 361.64 L656.27 362.74 L655.46 362.46 L655.18 360.86 L654.42 360.54 L653.09 361.48 L652.32 361.10 L652.24 359.47 L651.53 359.07 L650.09 359.83 L649.37 359.36 L649.49 357.73 L648.84 357.24 L647.32 357.81 L646.66 357.26 L646.99 355.66 L646.41 355.09 L644.82 355.47 L644.24 354.84 L644.77 353.29 L644.26 352.66 L642.64 352.83 L642.14 352.13 L642.86 350.66 L642.43 349.97 L640.80 349.94 L640.40 349.18 L641.29 347.82 L640.96 347.08 L639.34 346.84 L639.04 346.04 L640.09 344.79 L639.86 344.02 L638.28 343.58 L638.08 342.75 L639.29 341.65 L639.15 340.85 L637.64 340.22 L637.55 339.37 L638.88 338.42 L638.84 337.61 L637.43 336.80 L637.44 335.94 L638.88 335.18 L638.94 334.37 L637.64 333.38 L637.76 332.53 L639.29 331.95 L639.45 331.16 L638.28 330.02 L638.51 329.19 L640.09 328.81 L640.36 328.04 L639.34 326.76 L639.67 325.97 L641.29 325.78 L641.65 325.05 L640.80 323.66 L641.23 322.92 L642.86 322.94 L643.30 322.26 L642.64 320.77 L643.15 320.08 L644.77 320.31 L645.29 319.69 L644.82 318.13 L645.42 317.52 L646.99 317.94 L647.59 317.39 L647.32 315.79 L647.98 315.25 L649.49 315.87 L650.16 315.40 L650.09 313.77 L650.82 313.33 L652.24 314.13 L652.95 313.75 L653.09 312.12 L653.87 311.77 L655.18 312.74 L655.94 312.46 L656.27 310.86 L657.09 310.61 L658.27 311.74 L659.06 311.55 L659.59 310.01 L660.43 309.86 L661.46 311.13 L662.27 311.04 L662.99 309.58 L663.84 309.54 L664.70 310.93 L665.51 310.94 L666.41 309.58 L667.27 309.65 L667.94 311.13 L668.75 311.25 L669.81 310.01 L670.65 310.18 L671.13 311.74 L671.92 311.96 L673.13 310.86 L673.94 311.14 L674.22 312.74 L674.98 313.06 L676.31 312.12 L677.08 312.50 L677.16 314.13 L677.87 314.53 L679.31 313.77 L680.03 314.24 L679.91 315.87 L680.56 316.36 L682.08 315.79 L682.74 316.34 L682.41 317.94 L682.99 318.51 L684.58 318.13 L685.16 318.76 L684.63 320.31 L685.14 320.94 L686.76 320.77 L687.26 321.47 L686.54 322.94 L686.97 323.63 L688.60 323.66 L689.00 324.42 L688.11 325.78 L688.44 326.52 L690.06 326.76 L690.36 327.56 L689.31 328.81 L689.54 329.58 L691.12 330.02 L691.32 330.85 L690.11 331.95 L690.25 332.75 L691.76 333.38 L691.85 334.23 L690.52 335.18 L690.56 335.99 L691.97 336.80Z" fill="#b2b2b2" stroke="#0a0a0a" stroke-width="1.05" stroke-linejoin="round"/>
<path d="M458.35 134.52 L296.84 318.58 A27.62 27.62 0 0 0 335.19 358.10 L386.79 315.50 A27.62 27.62 0 0 1 421.96 315.50 L473.56 358.10 A27.62 27.62 0 0 0 508.74 358.10 L560.34 315.50 A27.62 27.62 0 0 1 595.51 315.50 L647.11 358.10 A27.62 27.62 0 0 0 685.46 318.58 L523.95 134.52 A43.64 43.64 0 0 0 458.35 134.52Z" fill="none" stroke="#4242c8" stroke-width="1.12" transform="translate(0.65,0.5)"/>
<path d="M485.7 163.3H496.7M491.2 157.8V168.8" stroke="#111" stroke-width="1" fill="none"/>
<text x="493.4" y="155.8" class="pn">1</text>
<path d="M478.7 162.8A12.5 12.5 0 0 0 491.7 175.3" stroke="#111" stroke-width="1.4" fill="none"/>
<path d="M495.0 175.3l-4.2 -3.6v7.2z" fill="#111"/>
<path d="M312.1 336.8H323.1M317.6 331.3V342.3" stroke="#111" stroke-width="1" fill="none"/>
<text x="319.8" y="329.3" class="pn">2</text>
<path d="M305.1 336.3A12.5 12.5 0 0 0 318.1 348.8" stroke="#111" stroke-width="1.4" fill="none"/>
<path d="M321.4 348.8l-4.2 -3.6v7.2z" fill="#111"/>
<path d="M398.9 336.8H409.9M404.4 331.3V342.3" stroke="#111" stroke-width="1" fill="none"/>
<text x="406.6" y="329.3" class="pn">3</text>
<path d="M404.9 348.8A12.5 12.5 0 0 1 391.9 338.3" stroke="#111" stroke-width="1.4" fill="none"/>
<path d="M391.9 334.0l-3.6 4.2h7.2z" fill="#111"/>
<path d="M485.7 336.8H496.7M491.2 331.3V342.3" stroke="#111" stroke-width="1" fill="none"/>
<text x="493.4" y="329.3" class="pn">4</text>
<path d="M478.7 336.3A12.5 12.5 0 0 0 491.7 348.8" stroke="#111" stroke-width="1.4" fill="none"/>
<path d="M495.0 348.8l-4.2 -3.6v7.2z" fill="#111"/>
<path d="M572.4 336.8H583.4M577.9 331.3V342.3" stroke="#111" stroke-width="1" fill="none"/>
<text x="580.1" y="329.3" class="pn">5</text>
<path d="M578.4 348.8A12.5 12.5 0 0 1 565.4 338.3" stroke="#111" stroke-width="1.4" fill="none"/>
<path d="M565.4 334.0l-3.6 4.2h7.2z" fill="#111"/>
<path d="M659.2 336.8H670.2M664.7 331.3V342.3" stroke="#111" stroke-width="1" fill="none"/>
<text x="666.9" y="329.3" class="pn">6</text>
<path d="M652.2 336.3A12.5 12.5 0 0 0 665.2 348.8" stroke="#111" stroke-width="1.4" fill="none"/>
<path d="M668.5 348.8l-4.2 -3.6v7.2z" fill="#111"/>
<!-- tool icons -->
<rect x="685.500" y="89.500" width="16" height="16" fill="#dfe6f2" stroke="#b4c0d6"/>
<path d="M693.50 91.10 L696.10 93.60 L694.45 93.60 L694.45 96.55 L697.40 96.55 L697.40 94.90 L699.90 97.50 L697.40 100.10 L697.40 98.45 L694.45 98.45 L694.45 101.40 L696.10 101.40 L693.50 103.90 L690.90 101.40 L692.55 101.40 L692.55 98.45 L689.60 98.45 L689.60 100.10 L687.10 97.50 L689.60 94.90 L689.60 96.55 L692.55 96.55 L692.55 93.60 L690.90 93.60Z" fill="#4a7a9c" stroke="#35607f" stroke-width=".5"/>
<rect x="687" y="108.500" width="10.500" height="11" fill="none" stroke="#d05a32" stroke-width="1.200"/>
<path d="M695.300 116.800l3.500 3.500" stroke="#3a2a2a" stroke-width="3.200" stroke-linecap="round"/><path d="M695.300 116.800l3.500 3.500" stroke="#e8682c" stroke-width="2" stroke-linecap="round"/>
<circle cx="692.300" cy="113.800" r="3.500" fill="#a8daf2" stroke="#1c2430" stroke-width="1.200"/>
<path d="M695.300 134.800l3.500 3.500" stroke="#3a2a2a" stroke-width="3.200" stroke-linecap="round"/><path d="M695.300 134.800l3.500 3.500" stroke="#e8682c" stroke-width="2" stroke-linecap="round"/>
<circle cx="692.300" cy="131.800" r="3.500" fill="#a8daf2" stroke="#1c2430" stroke-width="1.200"/>
</svg>
<!-- message box -->
<div style="left:227px;top:447px;width:473px;height:50px;background:#fff;border:1px solid #8c9096;box-shadow:inset 1px 1px 0 #d0d0d0;"><span style="position:absolute;left:3.6px;top:2px;font-family:'Liberation Serif','DejaVu Sans',serif;font-size:10px;line-height:13px;color:#000;">●</span><span style="position:absolute;left:11.8px;top:2.6px;font-family:'Liberation Serif',serif;font-size:10.5px;line-height:13px;color:#000;white-space:nowrap;">For this configuration, a DL-belt is required.</span></div>
</div>
<div style="left:4px;top:20.8px;width:741px;height:2.2px;background:#c9d0d8;"></div>
<!-- status bar -->
<div style="left:3.6px;top:577.8px;width:740.6px;height:18.8px;background:#d5d1c9;border:1.4px solid;border-color:#989488 #fbfbfa #fbfbfa #989488;"></div>
</div></body></html>
